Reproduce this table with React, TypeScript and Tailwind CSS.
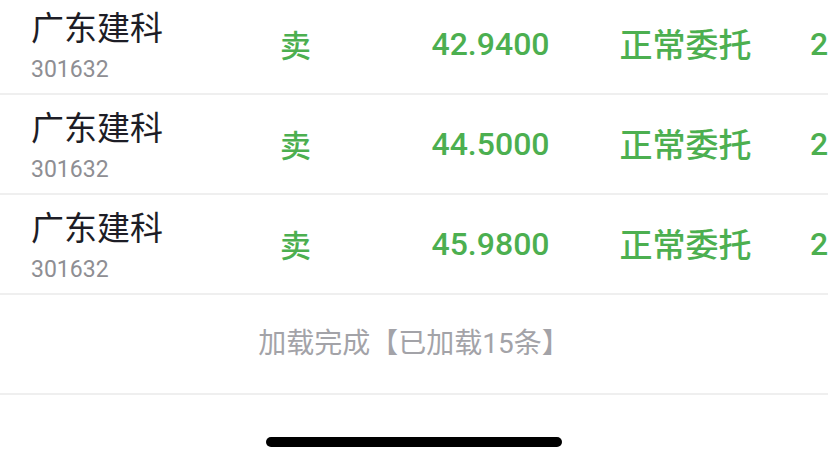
const rows = [
  { name: "广东建科", code: "301632", side: "卖", price: "42.9400", type: "正常委托", time: "2024-03-08" },
  { name: "广东建科", code: "301632", side: "卖", price: "44.5000", type: "正常委托", time: "2024-03-08" },
  { name: "广东建科", code: "301632", side: "卖", price: "45.9800", type: "正常委托", time: "2024-03-08" },
];

const cjk = "font-['Noto_Sans_CJK_SC',sans-serif]";
const num = "font-['Roboto','Noto_Sans_CJK_SC',sans-serif]";

export default function App() {
  return (
    <div className="w-[828px] h-[450px] overflow-hidden bg-white">
      <div className="-mt-[5px]">
        {rows.map((r, i) => (
          <div key={i} className="flex h-[100px] items-center border-b-2 border-[#efefef] whitespace-nowrap">
            <div className="w-[198px] shrink-0 pl-[31px] pt-[2px] flex flex-col">
              <span className={`${cjk} text-[33px] leading-[40px] text-[#1d1d26]`}>{r.name}</span>
              <span className={`${num} text-[23px] leading-[28px] text-[#8e8e93] mt-[10px]`}>{r.code}</span>
            </div>
            <div className={`w-[195px] shrink-0 text-center ${cjk} text-[31px] font-medium text-[#4caf50]`}>{r.side}</div>
            <div className={`w-[195px] shrink-0 text-center ${num} text-[32px] font-medium text-[#4caf50]`}>{r.price}</div>
            <div className={`w-[195px] shrink-0 text-center ${cjk} text-[33px] font-medium text-[#4caf50]`}>{r.type}</div>
            <div className={`pl-[27px] ${num} text-[32px] font-medium text-[#4caf50]`}>{r.time}</div>
          </div>
        ))}
        <div className="flex h-[100px] items-center justify-center border-b-2 border-[#efefef]">
          <span className={`${num} text-[28px] text-[#a3a3a8]`}>加载完成【已加载15条】</span>
        </div>
      </div>
      <div className="flex justify-center pt-[42px]">
        <div className="w-[296px] h-[10px] rounded-full bg-black" />
      </div>
    </div>
  );
}
